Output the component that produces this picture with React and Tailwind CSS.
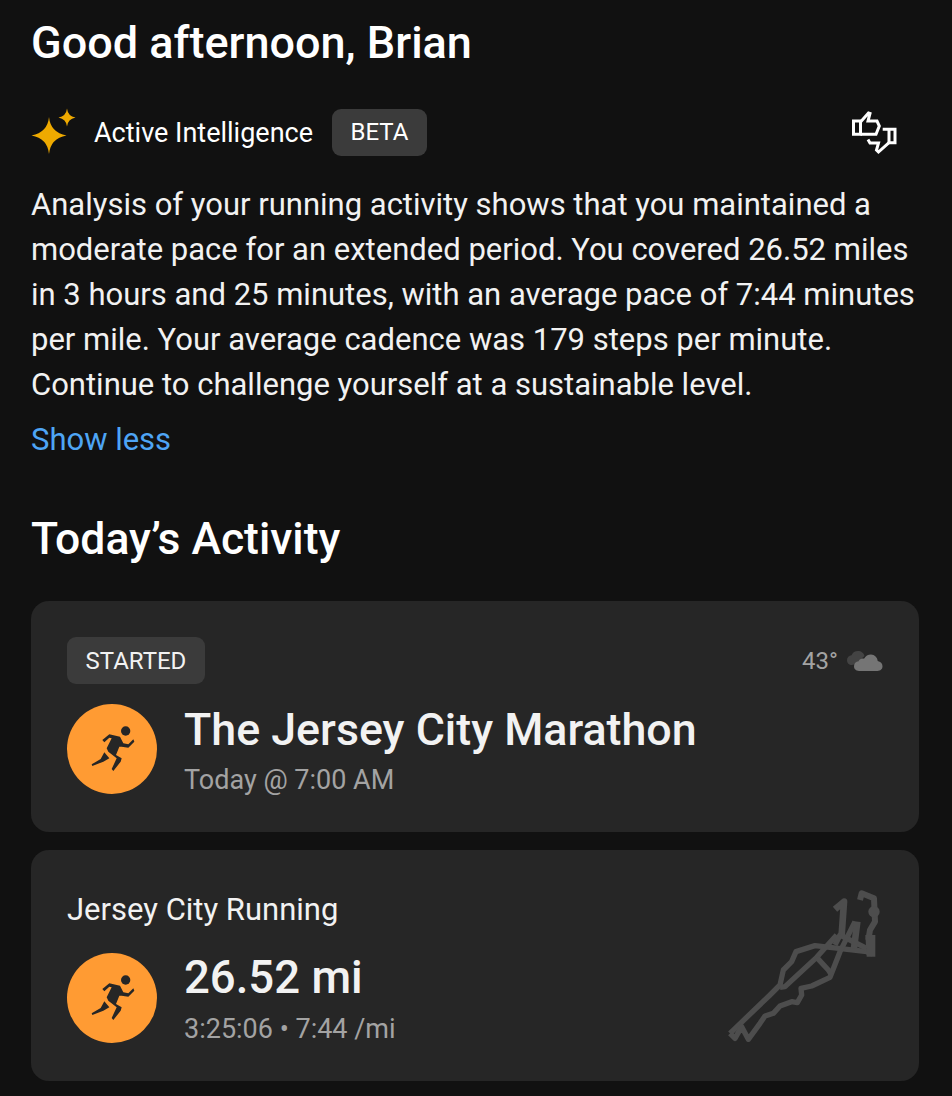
const Sparkle = () => (
  <svg width="46" height="48" viewBox="0 0 46 48" className="shrink-0">
    <path d="M18 9 Q19.500 24.500 35.500 27.500 Q19.500 30.500 18 46 Q16.500 30.500 0.500 27.500 Q16.500 24.500 18 9 Z" fill="#efaa00" />
    <path d="M36 0.500 Q36.800 8 44.500 9.500 Q36.800 11 36 18.500 Q35.200 11 27.500 9.500 Q35.200 8 36 0.500 Z" fill="#efaa00" />
  </svg>
);

const Thumbs = () => (
  <svg width="48" height="48" viewBox="0 0 48 48" fill="none" stroke="#fff" strokeWidth="3" strokeLinejoin="miter" className="shrink-0">
    <path d="M3.500 13 H10.500 V26.300 H3.500 Z" />
    <path d="M10.500 14 L18.500 5 L20 5.500 L18 13 H27 L29.300 18 L26 26.300 H10.500" />
    <path d="M32.700 21.300 H45 V34.700 H39 V21.300" />
    <path d="M39 34.700 L28.500 44 L26.500 42 L28.500 35 H20 L18 31.500" />
  </svg>
);

const Runner = () => (
  <svg width="90" height="90" viewBox="21 27 270 270" fill="#262626">
    <circle cx="197" cy="108" r="14" />
    <path d="M127 135 L148 118 L180 125 L190 145 L205 148 L220 133 L223 140 L205 158 L185 155 L178 155 L168 180 L185 190 L182 200 L160 228 L155 222 L170 190 L145 170 L140 160 L155 130 L148 128 L133 142 Z" />
    <path d="M133 172 L148 190 L130 200 L97 213 L95 208 L122 192 Z" />
  </svg>
);

const Clouds = () => (
  <svg width="36" height="24" viewBox="0 0 36 24" className="shrink-0">
    <path d="M5 16 C2 16 0 14 0 11 C0 8.500 2 6.500 4.500 6.300 C5.500 3.500 8 2 11 2 C14 2 17 4 17.500 7 L9 15 Z" fill="#434343" />
    <path d="M12 22 C9 22 7 20 7 17.300 C7 14.500 9 12.500 11.500 12.300 C12.500 10 15 9 17 9.800 C18.500 7 21 5.500 24 5.500 C27.500 5.500 30.500 8.500 30.700 12 C33.500 12.500 35.500 14.500 35.500 17.300 C35.500 20 33.500 22 30.500 22 Z" fill="#757575" />
  </svg>
);

const Route = () => (
  <svg width="170" height="170" viewBox="0 0 510 510" fill="none" stroke="#4d4d4d" strokeWidth="16" strokeLinejoin="round" className="shrink-0">
    <path d="M30 460 L150 345 L180 315 L190 270 L215 245 L228 215 L285 197 L440 215 L458 222" />
    <path d="M30 460 L45 475 L65 440 L85 478 L120 430 L135 408 L160 400 L180 378 L215 365 L232 368 L245 345 L243 325 L275 318 L330 292 L360 215 L405 125" />
    <path d="M180 322 L195 320 L290 232 L350 165" />
    <path d="M290 232 L325 270 L335 285" />
    <path d="M345 195 L360 165 L440 205" />
    <path d="M412 125 L402 205" strokeWidth="20" />
    <path d="M365 165 L372 65 L345 88" strokeWidth="20" />
    <path d="M445 180 L450 150 L465 125 L462 55 L425 40 L420 60" strokeWidth="18" />
    <circle cx="462" cy="95" r="17" fill="#4d4d4d" stroke="none" />
    <path d="M436 165 H466 V230 H440 Z" fill="#4d4d4d" stroke="none" />
  </svg>
);

const RunnerBadge = () => (
  <div className="w-[90px] h-[90px] rounded-full bg-[#ff9b33] shrink-0">
    <Runner />
  </div>
);

export default function App() {
  return (
    <div className="w-[952px] h-[1096px] overflow-hidden bg-[#111111] text-white pl-[31px] pr-[33px] pt-[15px] font-['Roboto',sans-serif]">
      <h1 className="text-[45px] leading-[56px] font-medium">Good afternoon, Brian</h1>

      <div className="flex items-center mt-[37px] h-[48px] pr-[21px]">
        <Sparkle />
        <span className="text-[27px] ml-[17px] pt-[2px]">Active Intelligence</span>
        <span className="ml-[19px] h-[47px] px-[18.500px] rounded-[9px] bg-[#3b3b3b] flex items-center text-[24px]">BETA</span>
        <div className="ml-auto">
          <Thumbs />
        </div>
      </div>

      <p className="text-[31px] leading-[45px] mt-[26px] text-[#f2f2f2]">
        Analysis of your running activity shows that you maintained a moderate pace for an extended period. You covered 26.52 miles in 3 hours and 25 minutes, with an average pace of 7:44 minutes per mile. Your average cadence was 179 steps per minute. Continue to challenge yourself at a sustainable level.
      </p>
      <div className="text-[31px] leading-[45px] mt-[10px] text-[#4ea5f5]">Show less</div>

      <h2 className="text-[44.500px] leading-[56px] font-medium mt-[49px]">Today’s Activity</h2>

      <div className="mt-[34px] flex flex-col gap-[18px]">
        <div className="h-[231px] rounded-[18px] bg-[#262626] px-[36px] pt-[36px]">
          <div className="flex items-center justify-between h-[47px]">
            <span className="h-[47px] px-[18.500px] rounded-[9px] bg-[#3b3b3b] flex items-center text-[24px] text-[#f2f2f2]">STARTED</span>
            <div className="flex items-center gap-[9px]">
              <span className="text-[24px] text-[#a3a3a3]">43°</span>
              <Clouds />
            </div>
          </div>
          <div className="flex items-center mt-[16px]">
            <RunnerBadge />
            <div className="ml-[27px] pt-[3px]">
              <div className="text-[44.750px] leading-[54px] font-medium text-[#f2f2f2]">The Jersey City Marathon</div>
              <div className="text-[27px] leading-[36px] mt-[5px] text-[#a3a3a3]">Today @ 7:00 AM</div>
            </div>
          </div>
        </div>

        <div className="h-[231px] rounded-[18px] bg-[#262626] pl-[36px] pr-[29px] flex items-start justify-between">
          <div className="pt-[41px]">
            <div className="text-[31px] leading-[38px] text-[#f2f2f2]">Jersey City Running</div>
            <div className="flex items-center mt-[20px]">
              <RunnerBadge />
              <div className="ml-[27px] pt-[2px]">
                <div className="text-[45.500px] leading-[54px] font-medium text-[#f2f2f2]">26.52 mi</div>
                <div className="text-[27px] leading-[36px] mt-[6px] text-[#a3a3a3]">3:25:06 • 7:44 /mi</div>
              </div>
            </div>
          </div>
          <div className="mt-[30px]">
            <Route />
          </div>
        </div>
      </div>
    </div>
  );
}
